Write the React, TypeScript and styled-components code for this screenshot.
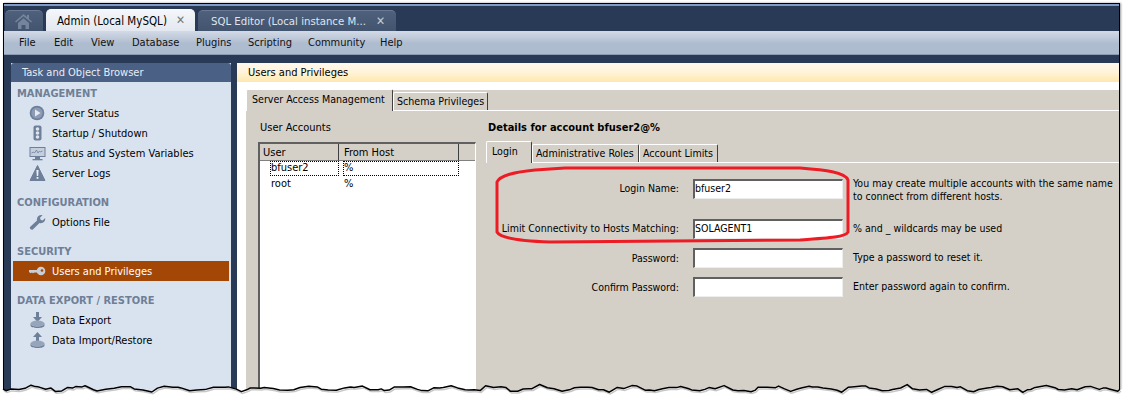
import React from "react";
import styled, { createGlobalStyle } from "styled-components";

const Global = createGlobalStyle`
  html, body { margin: 0; padding: 0; background: #fff; }
  body { font-family: "DejaVu Sans Condensed", "Noto Sans", sans-serif; font-size: 11px; color: #000; }
  * { box-sizing: border-box; }
`;
const Page = styled.div`
  position: relative; width: 1124px; height: 403px; overflow: hidden; background: #fff; padding: 3px 4px 0 3px;
`;
const Win = styled.div`
  height: 400px; background: #283a55; border: 1px solid #000; border-bottom: 0;
  display: flex; flex-direction: column; box-shadow: 1px 0 2px #999;
`;
const TopLine = styled.div`height: 2px; background: #7f9ac6; flex: none;`;
const TabBar = styled.div`
  height: 25px; display: flex; align-items: flex-end; gap: 3px; padding-left: 1px; flex: none;
`;
const Tab = styled.div<{ $active?: boolean; $w: number }>`
  width: ${p => p.$w}px; height: ${p => (p.$active ? 22 : 21)}px; border-radius: 5px 5px 0 0;
  display: flex; align-items: center; padding-left: ${p => (p.$active ? 11 : 13)}px; white-space: nowrap; position: relative;
  font-size: ${p => (p.$active ? 11.5 : 11.3)}px;
  color: ${p => (p.$active ? "#000" : "#dfe5ee")};
  background: ${p => (p.$active ? "linear-gradient(#f4f6f9,#e3e8f0)" : "linear-gradient(#4f607c,#43546f)")};
  border-top: 1px solid ${p => (p.$active ? "#fff" : "#6b7a93")};
`;
const HomeTab = styled(Tab)`padding-left: 10px;`;
const Close = styled.span<{ $active?: boolean }>`
  position: absolute; right: ${p => (p.$active ? 10 : 11)}px; top: 3px; font-size: 12px; color: ${p => (p.$active ? "#777" : "#c4ccd9")};
`;
const MenuBar = styled.div`
  height: 24px; display: flex; align-items: center; padding-left: 6px; background: linear-gradient(#d3dae6,#aebcd0 55%,#aebcd0);
  border-bottom: 1px solid #8c9bb3; flex: none;
`;
const MenuItem = styled.span<{ $w: number }>`width: ${p => p.$w}px; padding-left: 9px; color: #111; white-space: nowrap;`;
const Body = styled.div`flex: 1; display: flex; padding: 8px 0 0 7px; gap: 6px; min-height: 0;`;
const Side = styled.aside`width: 220px; background: #d9e3f0; display: flex; flex-direction: column; flex: none;`;
const SideHead = styled.div`
  height: 19px; background: #4a6085; color: #e8edf4; padding-left: 11px; line-height: 19px; border-radius: 3px 3px 0 0;
`;
const SideBody = styled.div`padding: 1px 2px 0;`;
const Section = styled.div`
  height: 20px; line-height: 21px; padding-left: 4px; margin-top: 9px; font-weight: 700; color: #6f7f96; white-space: nowrap;
  &:first-child { margin-top: 0; }
`;
const Item = styled.div<{ $sel?: boolean }>`
  height: 20px; display: flex; align-items: center; gap: 6px; padding-left: 16px; white-space: nowrap; line-height: 21px;
  background: ${p => (p.$sel ? "#a34707" : "transparent")}; color: ${p => (p.$sel ? "#fff" : "#000")};
`;
const Ico = styled.svg`width: 17px; height: 16px; flex: none;`;
const Main = styled.main`flex: 1; background: #fff; display: flex; flex-direction: column; min-width: 0;`;
const MainHead = styled.div`
  height: 19px; line-height: 19px; padding-left: 11px; background: linear-gradient(#fff9ee,#fff3d8 50%,#fee8ae); border-radius: 3px 0 0 0; flex: none;
`;
const Outer = styled.div`
  flex: 1; margin: 8px 0 0 9px; background: #d4d0c8; display: flex; flex-direction: column; min-height: 0;
`;
const Strip = styled.div`
  height: 21px; display: flex; align-items: flex-end; border-bottom: 1px solid #fff; flex: none;
`;
const WinTab = styled.div<{ $active?: boolean; $w: number }>`
  width: ${p => p.$w}px; height: ${p => (p.$active ? 22 : 18)}px; margin-bottom: ${p => (p.$active ? -1 : 0)}px;
  background: #d4d0c8; border-top: 1px solid #fff; border-left: 1px solid #fff; border-right: 1px solid #404040;
  border-radius: 2px 2px 0 0; white-space: nowrap; flex: none; position: relative; font-size: 10.6px;
  padding: ${p => (p.$active ? "2px 0 0 5px" : "1px 0 0 3px")}; line-height: 15px;
`;
const Panes = styled.div`flex: 1; display: flex; min-height: 0;`;
const Left = styled.div`width: 238px; flex: none; padding: 9px 0 0 12px;`;
const LeftTitle = styled.div`height: 22px; line-height: 15px; padding-left: 2px;`;
const ListBox = styled.div`
  width: 218px; height: 300px; background: #fff; border-top: 2px solid #606060; border-left: 2px solid #606060; border-right: 1px solid #fff;
`;
const ListHead = styled.div`display: flex; height: 17px; background: #d4d0c8;`;
const HeadCell = styled.div<{ $w: number; $pl: number }>`
  width: ${p => p.$w}px; padding-left: ${p => p.$pl}px; line-height: 18px; border-right: 1px solid #404040; border-bottom: 1px solid #808080; flex: none;
`;
const HeadRest = styled.div`flex: 1; border-bottom: 1px solid #808080;`;
const ListRow = styled.div`display: flex; height: 16px;`;
const Cell = styled.div<{ $w: number; $focus?: boolean; $ml: number }>`
  width: ${p => p.$w}px; margin-left: ${p => p.$ml}px; flex: none; height: 15px;
  border: 1px dotted ${p => (p.$focus ? "#000" : "transparent")}; line-height: 12px;
`;
const Details = styled.div`flex: 1; padding: 9px 0 0 2px; min-width: 0;`;
const DTitle = styled.div`font-weight: 700; height: 22px; line-height: 15px; padding-left: 2px;`;
const Form = styled.div`
  display: grid; grid-template-columns: 197px 150px 1fr; column-gap: 10px; align-items: start; padding-top: 16px; font-size: 10.5px;
`;
const Label = styled.div<{ $mt?: number }>`
  text-align: right; padding-right: 4px; line-height: 20px; height: 20px; white-space: nowrap; margin-top: ${p => p.$mt ?? 0}px;
`;
const Input = styled.div<{ $mt?: number }>`
  height: 20px; background: #fff; border-top: 2px solid #606060; border-left: 2px solid #606060; border-right: 1px solid #eee; border-bottom: 1px solid #eee;
  line-height: 15px; color: #000; margin-top: ${p => p.$mt ?? 0}px;
`;
const Hint = styled.div<{ $mt?: number; $h?: number }>`
  line-height: 13px; white-space: nowrap; padding-top: 3px; height: ${p => p.$h ?? 20}px; margin-top: ${p => p.$mt ?? 0}px;
`;
const Overlay = styled.svg`position: absolute; left: 0; top: 0; width: 1124px; height: 403px; pointer-events: none;`;

const fill = "#6e7f9a";
const PlayIcon = () => (
  <Ico viewBox="0 0 17 16"><circle cx="8" cy="8" r="7.3" fill={fill} /><circle cx="8" cy="8" r="5.6" fill="#8d9cb4" /><path d="M6 4.5 11.5 8 6 11.5z" fill="#e6ebf2" /></Ico>
);
const LightIcon = () => (
  <Ico viewBox="0 0 17 16"><rect x="4.5" y="0.5" width="8" height="15" rx="2" fill={fill} /><circle cx="8.5" cy="4" r="1.8" fill="#dfe5ee" /><circle cx="8.5" cy="8" r="1.8" fill="#dfe5ee" /><circle cx="8.5" cy="12" r="1.8" fill="#dfe5ee" /></Ico>
);
const MonitorIcon = () => (
  <Ico viewBox="0 0 17 16"><rect x="0.5" y="2" width="16" height="10" fill={fill} /><rect x="1.5" y="3" width="14" height="8" fill="#c4cedd" /><path d="M2.5 8l2-1 1 1 2-3 1.5 3 1.5-2 1 1 2-1" stroke={fill} strokeWidth=".8" fill="none" /><rect x="6" y="12" width="5" height="2" fill={fill} /><rect x="3.5" y="14" width="10" height="1.3" fill={fill} /></Ico>
);
const WarnIcon = () => (
  <Ico viewBox="0 0 17 16"><path d="M8.5 0.5 16 15.5H1z" fill={fill} stroke={fill} strokeLinejoin="round" /><path d="M7.4 5h2.2l-.4 6H7.8z" fill="#eef1f6" /><rect x="7.6" y="12" width="1.8" height="1.8" fill="#eef1f6" /></Ico>
);
const WrenchIcon = () => (
  <Ico viewBox="0 0 17 16"><path d="M1 13 8 6.5C7.3 3.5 9.8.6 13.5 1.2L11 3.8l.6 2 2 .6 2.6-2.5C16.8 7.5 13.8 10 10.5 9L3.8 15.5C2.5 16.2.3 14.6 1 13z" fill={fill} /></Ico>
);
const KeyIcon = () => (
  <Ico viewBox="0 0 17 16"><circle cx="12" cy="8" r="4.3" fill="#c9ced6" /><circle cx="13" cy="7.5" r="1.3" fill="#a34707" /><path d="M0 7h9v2.5H5.5l-.7.8-.8-.8-.8.8-.8-.8-.8.8L0 9z" fill="#c9ced6" /></Ico>
);
const DownIcon = () => (
  <Ico viewBox="0 0 17 16"><path d="M7 0h3v5h3l-4.5 5L4 5h3z" fill={fill} /><ellipse cx="8.5" cy="11.5" rx="7" ry="3" fill="#97a5ba" /><path d="M1.5 11.5v2c0 1.6 3 2.5 7 2.5s7-.9 7-2.5v-2c0 1.6-3 3-7 3s-7-1.4-7-3z" fill={fill} /></Ico>
);
const UpIcon = () => (
  <Ico viewBox="0 0 17 16"><path d="M8.5 0 13 5h-3v5H7V5H4z" fill={fill} /><ellipse cx="8.5" cy="11.5" rx="7" ry="3" fill="#97a5ba" /><path d="M1.5 11.5v2c0 1.6 3 2.5 7 2.5s7-.9 7-2.5v-2c0 1.6-3 3-7 3s-7-1.4-7-3z" fill={fill} /></Ico>
);
const HomeIcon = () => (
  <svg width="17" height="15" viewBox="0 0 17 15"><path d="M8.5 0 12 3V1h2v4l3 2.5-.9 1L8.5 2.3 1 8.5 0 7.5z" fill="#74849d" /><path d="M3 9l5.5-4.8L14 9v6h-3.5v-4h-4v4H3z" fill="#74849d" /></svg>
);

const menu: [string, number][] = [["File", 35], ["Edit", 37], ["View", 41], ["Database", 64], ["Plugins", 52], ["Scripting", 60], ["Community", 72], ["Help", 40]];

function tornLine() {
  let x = 3, seed = 11;
  const r = () => { seed = (seed * 16807) % 2147483647; return seed / 2147483647; };
  let pts = "M3 389";
  while (x < 1120) {
    x = Math.min(1120, x + 3 + r() * 6);
    const y = 388.5 + Math.sin(x / 7.3) * 2.2 + Math.sin(x / 2.9) * 0.8 + (r() - 0.5) * 2.6;
    pts += ` L${x.toFixed(1)} ${y.toFixed(1)}`;
  }
  return pts;
}
const tornEdge = tornLine();
const tornFill = tornEdge + " L1124 389 L1124 403 L0 403 L0 389 Z";

export default function App() {
  return (
    <Page>
      <Global />
      <Win>
        <TopLine />
        <TabBar>
          <HomeTab $w={38}><HomeIcon /></HomeTab>
          <Tab $w={149} $active>Admin (Local MySQL)<Close $active>✕</Close></Tab>
          <Tab $w={198}>SQL Editor (Local instance M...<Close>✕</Close></Tab>
        </TabBar>
        <MenuBar>{menu.map(([m, w]) => <MenuItem key={m} $w={w}>{m}</MenuItem>)}</MenuBar>
        <Body>
          <Side>
            <SideHead>Task and Object Browser</SideHead>
            <SideBody>
              <Section>MANAGEMENT</Section>
              <Item><PlayIcon />Server Status</Item>
              <Item><LightIcon />Startup / Shutdown</Item>
              <Item><MonitorIcon />Status and System Variables</Item>
              <Item><WarnIcon />Server Logs</Item>
              <Section>CONFIGURATION</Section>
              <Item><WrenchIcon />Options File</Item>
              <Section>SECURITY</Section>
              <Item $sel><KeyIcon />Users and Privileges</Item>
              <Section>DATA EXPORT / RESTORE</Section>
              <Item><DownIcon />Data Export</Item>
              <Item><UpIcon />Data Import/Restore</Item>
            </SideBody>
          </Side>
          <Main>
            <MainHead>Users and Privileges</MainHead>
            <Outer>
              <Strip>
                <WinTab $w={147} $active>Server Access Management</WinTab>
                <WinTab $w={95}>Schema Privileges</WinTab>
              </Strip>
              <Panes>
                <Left>
                  <LeftTitle>User Accounts</LeftTitle>
                  <ListBox>
                    <ListHead>
                      <HeadCell $w={79} $pl={3}>User</HeadCell>
                      <HeadCell $w={120} $pl={5}>From Host</HeadCell>
                      <HeadRest />
                    </ListHead>
                    <ListRow><Cell $ml={10} $w={69} $focus>bfuser2</Cell><Cell $ml={4} $w={116} $focus>%</Cell></ListRow>
                    <ListRow><Cell $ml={10} $w={69}>root</Cell><Cell $ml={4} $w={116}>%</Cell></ListRow>
                  </ListBox>
                </Left>
                <Details>
                  <DTitle>Details for account bfuser2@%</DTitle>
                  <Strip>
                    <WinTab $w={46} $active>Login</WinTab>
                    <WinTab $w={107}>Administrative Roles</WinTab>
                    <WinTab $w={79}>Account Limits</WinTab>
                  </Strip>
                  <Form>
                    <Label $mt={-1}>Login Name:</Label><Input>bfuser2</Input>
                    <Hint $mt={-5} $h={35}>You may create multiple accounts with the same name<br />to connect from different hosts.</Hint>
                    <Label $mt={9}>Limit Connectivity to Hosts Matching:</Label><Input $mt={10}>SOLAGENT1</Input>
                    <Hint $mt={10}>% and _ wildcards may be used</Hint>
                    <Label $mt={9}>Password:</Label><Input $mt={9} />
                    <Hint $mt={9}>Type a password to reset it.</Hint>
                    <Label $mt={9}>Confirm Password:</Label><Input $mt={9} />
                    <Hint $mt={9}>Enter password again to confirm.</Hint>
                  </Form>
                </Details>
              </Panes>
            </Outer>
          </Main>
        </Body>
      </Win>
      <Overlay viewBox="0 0 1124 403">
        <path d="M497 182 C500 175 515 172 535 170 L565 168 L800 168 C825 170 845 172 848 180 L848 232 C846 237 830 238 800 240 L550 242 C520 241 500 238 497 232 Z" fill="none" stroke="#ed1c24" strokeWidth="3" />
        <path d={tornFill} fill="#fff" />
        <path d={tornEdge} fill="none" stroke="#999" strokeWidth="1.5" opacity=".55" transform="translate(1 1.8)" />
        <path d={tornEdge} fill="none" stroke="#000" strokeWidth="1.5" strokeLinejoin="round" />
      </Overlay>
    </Page>
  );
}
